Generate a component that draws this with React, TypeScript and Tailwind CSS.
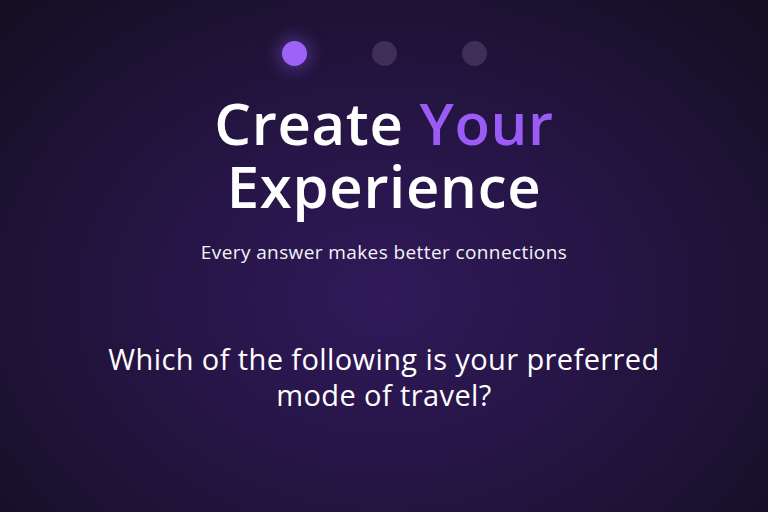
export default function App() {
  return (
    <div
      className="flex h-[512px] w-[768px] flex-col items-center overflow-hidden bg-[radial-gradient(ellipse_at_50%_58%,#31195a_0%,#261546_40%,#140f22_100%)] text-white"
      style={{ fontFamily: '"Open Sans", Lato, sans-serif' }}
    >
      {/* Progress dots */}
      <div className="mt-[41px] flex gap-[65px]">
        <span className="h-[25px] w-[25px] rounded-full bg-[#9d63f8] shadow-[0_0_16px_4px_rgba(157,99,248,0.35)]" />
        <span className="h-[25px] w-[25px] rounded-full bg-[#3f2e58]" />
        <span className="h-[25px] w-[25px] rounded-full bg-[#3f2e58]" />
      </div>

      <h1 className="mt-[25px] text-center text-[58px] font-semibold leading-[63px] tracking-[0.7px]">
        Create <span className="text-[#9b5cf6]">Your</span>
        <br />
        Experience
      </h1>

      <p className="mt-[23px] text-[19px] leading-6 tracking-[0.4px] text-gray-100">
        Every answer makes better connections
      </p>

      <h2 className="mt-[77px] text-center text-[29px] font-normal leading-[36px] tracking-[0.4px]">
        Which of the following is your preferred
        <br />
        mode of travel?
      </h2>
    </div>
  )
}
